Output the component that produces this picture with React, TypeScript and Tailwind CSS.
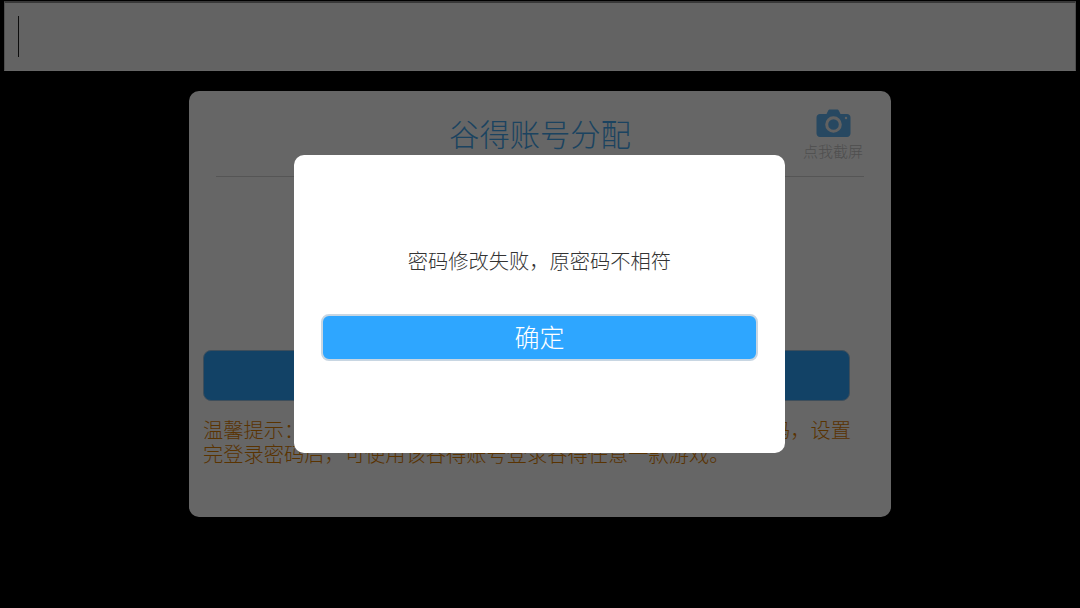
import React from 'react';

const cjk = { fontFamily: '"Liberation Sans", "Noto Sans CJK SC", sans-serif' };

function CameraIcon() {
  return (
    <svg width="35" height="28" viewBox="0 0 35 28" fill="none">
      <path
        d="M4 5h6.5l1.6-3.2C12.500 1 13 .6 14 .6h7c1 0 1.500.4 1.900 1.200L24.500 5H31c2 0 3.500 1.500 3.500 3.500v16c0 2-1.500 3.400-3.500 3.400H4c-2 0-3.500-1.400-3.500-3.400v-16C.5 6.500 2 5 4 5z"
        fill="#62b4f2"
      />
      <circle cx="17.500" cy="15.500" r="6.800" stroke="#f2f2f2" strokeWidth="3" />
      <circle cx="30" cy="9" r="1.200" fill="#f2f2f2" />
    </svg>
  );
}

export default function App() {
  return (
    <div className="relative flex h-[608px] w-[1080px] flex-col overflow-hidden bg-black" style={cjk}>
      {/* input bar */}
      <div className="mx-[4px] mt-px flex h-[70px] items-center border border-t-2 border-[#c4c4c4] border-t-[#8c8c8c] border-b-[#ffffff] bg-[#f8f8f8] pl-[13px]">
        <div className="h-[41px] w-px bg-[#222]" />
      </div>

      {/* card behind the dialog */}
      <div className="mx-auto mt-[20px] h-[426px] w-[702px] rounded-[10px] bg-white">
        <div className="mx-[27px] grid h-[86px] grid-cols-[1fr_auto_1fr] border-b border-[#d4d4d4]">
          <div />
          <div className="pt-[23px] text-[30.300px] leading-[44px] font-light text-[#45a8f0]">谷得账号分配</div>
          <div className="flex flex-col items-end pt-[18px] pr-px">
            <div className="flex w-[60px] flex-col items-center">
              <CameraIcon />
              <div className="mt-[6px] text-[15px] leading-[18px] font-light text-[#c4c4c4]">点我截屏</div>
            </div>
          </div>
        </div>
        <div className="ml-[14px] w-[647px]">
          <div className="mt-[173px] h-[51px] rounded-[8px] border border-[#9cc4e4] bg-[#2fa6ff]" />
          <div className="mt-[18px] text-[20.250px] leading-[24px] font-light text-[#e08000]">
            <div className="whitespace-nowrap">温馨提示：您的谷得账号分配成功，请点击按钮前往设置登录密码，设置</div>
            <div className="whitespace-nowrap">完登录密码后，可使用该谷得账号登录谷得任意一款游戏。</div>
          </div>
        </div>
      </div>

      {/* overlay + dialog */}
      <div className="absolute inset-0 flex items-center justify-center bg-black/60 pr-px">
        <div className="flex h-[298px] w-[491px] flex-col items-center rounded-[10px] bg-white">
          <div className="mt-[94px] text-[20.250px] leading-[26px] font-light text-[#333333]">密码修改失败，原密码不相符</div>
          <button className="mt-[39px] flex h-[47px] w-[437px] items-center justify-center rounded-[8px] border-2 border-[#c8d6e2] bg-[#2ea6ff] pt-[2px] text-[25px] font-light text-white">
            确定
          </button>
        </div>
      </div>
    </div>
  );
}
